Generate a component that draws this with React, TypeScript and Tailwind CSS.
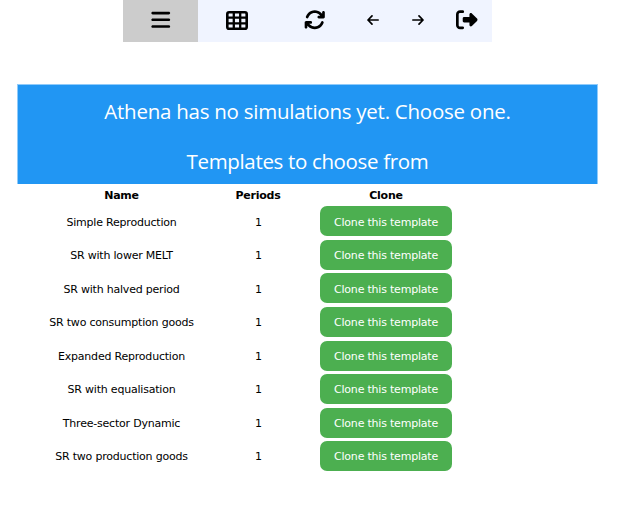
import { FaBars, FaArrowsRotate, FaRightFromBracket } from "react-icons/fa6";

const templates = [
  "Simple Reproduction",
  "SR with lower MELT",
  "SR with halved period",
  "SR two consumption goods",
  "Expanded Reproduction",
  "SR with equalisation",
  "Three-sector Dynamic",
  "SR two production goods",
];

function Arrow({ flip = false }: { flip?: boolean }) {
  return (
    <svg
      viewBox="0 0 12 10"
      className={flip ? "h-[10px] w-[12px] rotate-180" : "h-[10px] w-[12px]"}
      fill="none"
      stroke="currentColor"
      strokeWidth="1.7"
      strokeLinecap="round"
      strokeLinejoin="round"
    >
      <path d="M11.2 5H1M5 .9 1 5l4 4.1" />
    </svg>
  );
}

function TableIcon() {
  return (
    <svg viewBox="0 0 22 19" className="h-[19px] w-[22px]" fill="none" stroke="currentColor">
      <rect x="1.3" y="1.3" width="19.4" height="16.4" rx="1.8" strokeWidth="2.6" />
      <path d="M7.8 1v17M14.2 1v17M1 6.6h20M1 12.4h20" strokeWidth="2.3" />
    </svg>
  );
}

function Toolbar() {
  return (
    <nav className="mx-auto flex h-[42.4px] w-[369px] bg-[#f0f4ff] text-[21.5px] text-black">
      <button className="flex w-[75px] items-center justify-center bg-[#cccccc] pb-[2.5px]">
        <FaBars />
      </button>
      <button className="flex w-[78px] items-center justify-center pb-[2.4px]">
        <TableIcon />
      </button>
      <button className="flex w-[78px] items-center justify-center pb-[2.5px]">
        <FaArrowsRotate />
      </button>
      <button className="flex w-[38.5px] items-center justify-center pb-[3.4px]">
        <Arrow />
      </button>
      <button className="flex w-[50px] items-center justify-center pb-[3.4px]">
        <Arrow flip />
      </button>
      <button className="flex w-[49px] items-center justify-center pb-[2.5px]">
        <FaRightFromBracket />
      </button>
    </nav>
  );
}

export default function App() {
  return (
    <div className="h-[512px] w-[617px] overflow-hidden bg-white pr-[2px] font-['DejaVu_Sans',sans-serif] text-[11px] text-black">
      <Toolbar />
      <header className="mt-[41.6px] ml-[17px] flex h-[100px] w-[581px] flex-col items-center border-x border-t border-[#90cbfa] bg-[#2196f3] pt-[1px] font-['Open_Sans',sans-serif] text-[20.5px] leading-[50px] text-white">
        <h2 className="tracking-[-0.25px] whitespace-nowrap">Athena has no simulations yet. Choose one.</h2>
        <h2 className="tracking-[-0.34px] whitespace-nowrap">Templates to choose from</h2>
      </header>
      <table className="ml-[17.5px] w-[436px] table-fixed border-collapse text-center">
        <colgroup>
          <col className="w-[208px]" />
          <col className="w-[65px]" />
          <col className="w-[163px]" />
        </colgroup>
        <thead>
          <tr className="h-[20.5px] tracking-[-0.24px]">
            <th className="p-0 pt-[3px] leading-[17.5px]">Name</th>
            <th className="p-0 pt-[3px] leading-[17.5px]">Periods</th>
            <th className="p-0 pt-[3px] pl-[28px] leading-[17.5px]">Clone</th>
          </tr>
        </thead>
        <tbody>
          {templates.map((name) => (
            <tr key={name} className="h-[33.57px] tracking-[-0.21px]">
              <td className="p-0 pt-[3px] whitespace-nowrap">{name}</td>
              <td className="p-0 pt-[3px] pl-[1px]">1</td>
              <td className="p-0 pl-[28px]">
                <button className="mx-auto block h-[30px] w-[132px] rounded-[7px] bg-[#4caf50] pt-[3px] whitespace-nowrap text-white">
                  Clone this template
                </button>
              </td>
            </tr>
          ))}
        </tbody>
      </table>
    </div>
  );
}
